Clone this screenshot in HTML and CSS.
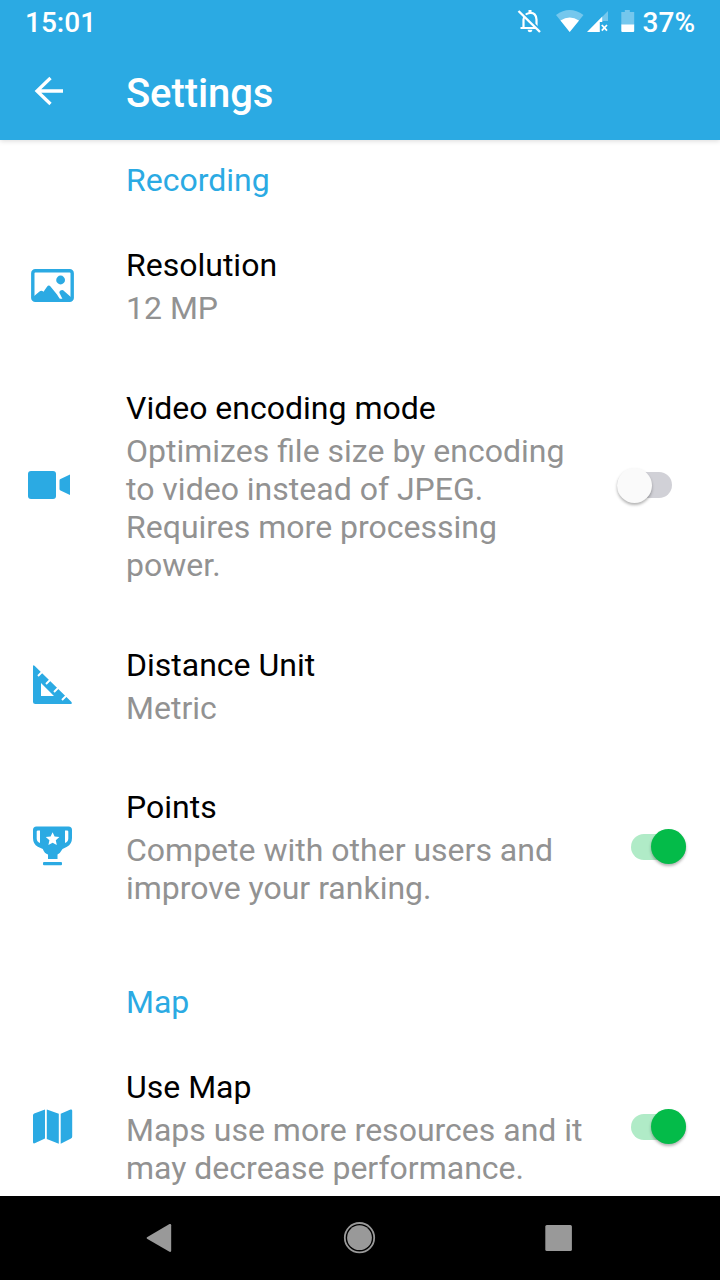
FILE: index.html
```html
<!DOCTYPE html>
<html lang="en">
<head>
<meta charset="utf-8">
<title>Settings</title>
<link rel="stylesheet" href="styles.css">
</head>
<body>
<div class="screen">
  <header class="header">
    <div class="status">
      <span class="clock">15:01</span>
      <div class="indicators">
        <svg width="127" height="34" viewBox="510 6 127 34">
          <g fill="none" stroke="#fff" stroke-width="2.200">
            <path d="M523.500 28V19.500q.5-6 6.500-6.500t6.500 6.500V28M520.500 28h18" />
          </g>
          <path d="M519.500 10.500l21 20" stroke="#2baae3" stroke-width="2.500"/>
          <path d="M518.500 11l21.500 21" stroke="#fff" stroke-width="2.400"/>
          <path d="M528.500 10h3v3h-3zM527.500 29.700h5q-.4 2.500-2.500 2.500t-2.500-2.500z" fill="#fff"/>
          <path d="M556 15q13.500-10 27.500 0L569.700 32z" fill="#fff" opacity=".35"/>
          <path d="M560.500 20.500q9.200-6 18.500 0L569.700 32z" fill="#fff"/>
          <path d="M602.300 16.800L608 11v10h-5.700z" fill="#fff" opacity=".35"/>
          <path d="M587 32l15.300-15.500v5.500h-2.500v10z" fill="#fff"/>
          <path d="M601.800 25l5.200 5.600m0-5.600l-5.200 5.600" stroke="#fff" stroke-width="1.800"/>
          <path d="M621.300 12h3.500v-2h5v2h4.400v13h-12.900z" fill="#fff" opacity=".35"/>
          <path d="M621.300 24.500h12.900V31q0 1-1 1h-10.900q-1 0-1-1z" fill="#fff"/>
        </svg>
        <span class="battery">37%</span>
      </div>
    </div>
    <div class="toolbar">
      <svg class="back" width="30" height="30" viewBox="34 76 30 30"><path d="M63 91H37M50.500 78L37 91l13.500 13" fill="none" stroke="#fff" stroke-width="3.300"/></svg>
      <h1>Settings</h1>
    </div>
  </header>
  <main class="content">
    <h2 class="section">Recording</h2>
    <div class="row">
      <svg class="icon" viewBox="0 0 70 61"><rect x="12.800" y="14.800" width="39.400" height="29.600" rx="2.500" fill="none" stroke="#2baae3" stroke-width="3.400"/><circle cx="40.600" cy="24" r="4.400"/><path d="M13 45v-4l6.500-5.500q2-1.500 4 .3l3.500-5q1.800-2.500 3.700 0l6.300 7.700 3.500 5.500h2.500l-3-6q-1.500-2 .5-3.500 2-1.500 3.800.8L52 42v3z"/></svg>
      <div class="copy"><h3>Resolution</h3><p>12 MP</p></div>
    </div>
    <div class="row">
      <svg class="icon" viewBox="0 0 70 61"><rect x="8" y="15" width="28" height="28" rx="3"/><path d="M39.500 24.500q0-1.200 1-1.600l9.500-4.400V39l-9.500-4.500q-1-.5-1-1.500z"/></svg>
      <div class="copy"><h3>Video encoding mode</h3><p>Optimizes file size by encoding to video instead of JPEG. Requires more processing power.</p></div>
      <span class="switch off"></span>
    </div>
    <div class="row distance">
      <svg class="icon" viewBox="0 0 70 61"><path fill-rule="evenodd" d="M13 10.500q0-2 1.500-.7L51 45.500q2 2.500-.5 2.500H15.500q-2.500 0-2.500-2.500zM21 27v13h13z"/><path d="M22.500 15.500l-4.500 4.500M30.500 23.500l-4.500 4.500M38.500 31.500l-4.500 4.500M46.500 39.500l-4.500 4.500" stroke="#fff" stroke-width="1.900"/></svg>
      <div class="copy"><h3>Distance Unit</h3><p>Metric</p></div>
    </div>
    <div class="row">
      <svg class="icon" viewBox="0 0 70 61"><path fill-rule="evenodd" d="M16.500 9.500h32q3.500 0 3.500 3.500v8q0 6-5 8.700l-4.500 2.300q-2.500 4.500-5 5.500V42h-9.500v-4.500q-3.500-1-5.200-5.500l-5-2.300Q13 27 13 21v-8q0-3.500 3.500-3.500zM16.700 14.500v7q0 3 3.300 4.500V13.500h-2q-1.300 0-1.300 1zM45 13.500V26q3.300-1.500 3.300-4.500v-7q0-1-1.300-1z"/><path fill="#fff" d="M32.600 15.200l2 4.400 4.800.5-3.600 3.200 1 4.800-4.200-2.400-4.200 2.400 1-4.800-3.600-3.200 4.800-.5z"/><rect x="23" y="45" width="19" height="3.200" rx="1"/></svg>
      <div class="copy"><h3>Points</h3><p>Compete with other users and improve your ranking.</p></div>
      <span class="switch"></span>
    </div>
    <h2 class="section map">Map</h2>
    <div class="row">
      <svg class="icon" viewBox="0 0 70 61"><path d="M13 18.500q0-1.400 1.200-2l10.800-4V41.500l-10.300 4.800q-1.700.6-1.700-1zM26.800 12.500l12 4.300v30l-12-4.800zM40.700 16.800l9.800-4.300q1.700-.5 1.700 1.200V39.500q0 1.300-1.200 2l-10.300 5.300z"/></svg>
      <div class="copy"><h3>Use Map</h3><p>Maps use more resources and it may decrease performance.</p></div>
      <span class="switch"></span>
    </div>
  </main>
  <nav class="nav">
    <svg width="720" height="84" viewBox="0 1196 720 84"><g fill="#999"><path d="M147 1237.200q-.8.800 0 1.600l22.500 13q1.700.5 1.700-1v-25.500q0-1.700-1.700-1.200z"/><circle cx="359.500" cy="1237.700" r="12.400"/><circle cx="359.500" cy="1237.700" r="14.700" fill="none" stroke="#999" stroke-width="1.800"/><rect x="545.300" y="1225" width="26.600" height="26" rx="1.500"/></g></svg>
  </nav>
</div>
</body>
</html>
```
FILE: styles.css
```css
* { box-sizing: border-box; margin: 0; padding: 0; }
body { font-family: Roboto, "Liberation Sans", sans-serif; }
svg { display: block; }
.screen { width: 720px; height: 1280px; display: flex; flex-direction: column; overflow: hidden; background: #fff; }
.header { flex: 0 0 140px; background: #2baae3; color: #fff; box-shadow: 0 1px 5px rgba(0,0,0,.15); }
.status { height: 46px; padding: 0 25px; display: flex; justify-content: space-between; align-items: center; font-size: 28px; font-weight: 500; }
.clock, .battery { padding-bottom: 2px; }
.indicators { display: flex; align-items: center; gap: 6px; }
.toolbar { height: 94px; padding: 1px 0 0 34px; display: flex; align-items: center; gap: 62px; }
.back { margin-bottom: 5px; }
h1 { padding-top: 1px; font-size: 40px; line-height: 48px; font-weight: 500; letter-spacing: -.1px; }
.content { flex: 1; min-height: 0; padding-top: 21px; overflow: hidden; }
.section { padding: 0 0 16px 126px; font-size: 32px; line-height: 38px; font-weight: 400; color: #2baae3; }
.section.map { margin-top: 45px; }
.row { display: grid; grid-template-columns: 106px 460px 1fr; align-items: center; padding: 31px 34px 31px 20px; }
.row.distance { padding-bottom: 30px; }
.icon { width: 70px; height: 61px; fill: #2baae3; }
h3 { margin-bottom: 5px; font-size: 32px; line-height: 38px; font-weight: 400; color: #000; }
.copy p { font-size: 32px; line-height: 38px; color: #929292; }
.switch { justify-self: end; display: flex; align-items: center; justify-content: flex-end; width: 55px; height: 26px; margin-bottom: 2px; border-radius: 13px; background: #b0ebc7; }
.switch::before { content: ""; width: 35px; height: 35px; flex: none; border-radius: 50%; background: #04bb49; box-shadow: 0 2px 3px rgba(0,0,0,.3); }
.switch.off { justify-content: flex-start; margin-right: 14px; margin-bottom: 3px; background: #d1d1d7; }
.switch.off::before { margin-left: -.5px; background: #fafafa; }
.nav { flex: 0 0 84px; background: #000; }
```
